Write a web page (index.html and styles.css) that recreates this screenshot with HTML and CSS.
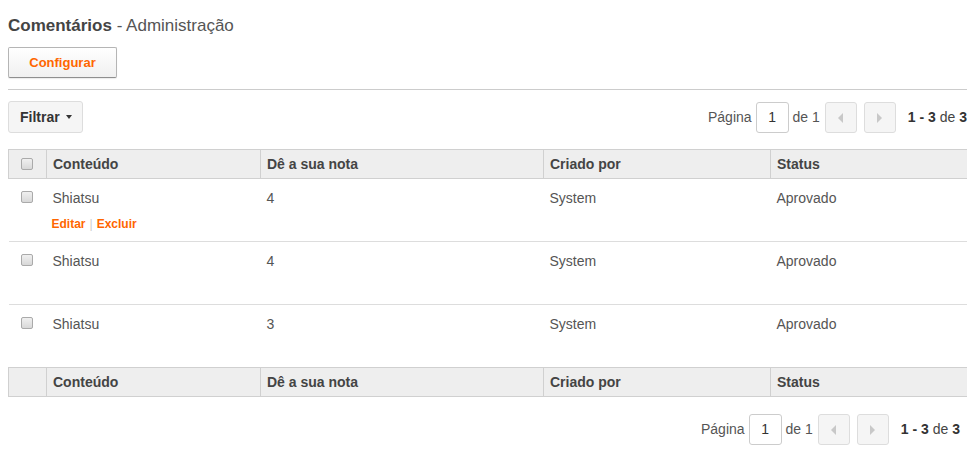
FILE: index.html
```html
<!DOCTYPE html>
<html lang="pt">
<head>
<meta charset="utf-8">
<title>Comentários - Administração</title>
<link rel="stylesheet" href="styles.css">
</head>
<body>
<h1 class="title"><strong>Comentários</strong> - Administração</h1>
<button class="btn-config">Configurar</button>
<hr class="sep">
<div class="toolbar">
  <button class="btn-filter">Filtrar <span class="caret"></span></button>
  <div class="pager">
    <span class="lbl">Página</span>
    <span class="page-input">1</span>
    <span class="lbl">de 1</span>
    <span class="pbtn prev"><span class="tri-left"></span></span>
    <span class="pbtn next"><span class="tri-right"></span></span>
    <span class="count"><b>1 - 3</b> de <b>3</b></span>
  </div>
</div>
<table class="grid">
  <colgroup>
    <col class="c-check"><col class="c-content"><col class="c-nota"><col class="c-criado"><col class="c-status">
  </colgroup>
  <thead>
    <tr><th class="check"><span class="cb"></span></th><th>Conteúdo</th><th>Dê a sua nota</th><th>Criado por</th><th>Status</th></tr>
  </thead>
  <tbody>
    <tr>
      <td class="check"><span class="cb"></span></td>
      <td>Shiatsu<div class="actions"><a>Editar</a><span class="bar">|</span><a>Excluir</a></div></td>
      <td>4</td><td>System</td><td>Aprovado</td>
    </tr>
    <tr>
      <td class="check"><span class="cb"></span></td>
      <td>Shiatsu<div class="actions hidden"><a>Editar</a><span class="bar">|</span><a>Excluir</a></div></td>
      <td>4</td><td>System</td><td>Aprovado</td>
    </tr>
    <tr>
      <td class="check"><span class="cb"></span></td>
      <td>Shiatsu<div class="actions hidden"><a>Editar</a><span class="bar">|</span><a>Excluir</a></div></td>
      <td>3</td><td>System</td><td>Aprovado</td>
    </tr>
  </tbody>
  <tfoot>
    <tr><th class="check"></th><th>Conteúdo</th><th>Dê a sua nota</th><th>Criado por</th><th>Status</th></tr>
  </tfoot>
</table>
<div class="bottom">
  <div class="pager pager-bottom">
    <span class="lbl">Página</span>
    <span class="page-input">1</span>
    <span class="lbl">de 1</span>
    <span class="pbtn prev"><span class="tri-left"></span></span>
    <span class="pbtn next"><span class="tri-right"></span></span>
    <span class="count"><b>1 - 3</b> de <b>3</b></span>
  </div>
</div>
</body>
</html>
```
FILE: styles.css
```css
body {
  margin: 8px;
  font-family: "Liberation Sans", Arial, sans-serif;
  color: #444;
  background: #fff;
}
.title {
  margin: 7px 0 0;
  font-size: 17px;
  line-height: 22px;
  font-weight: normal;
  color: #555;
}
.title strong {
  color: #444;
  font-weight: bold;
}
.btn-config {
  display: block;
  margin-top: 10px;
  width: 109px;
  height: 31px;
  padding: 0;
  font-family: inherit;
  font-size: 13px;
  font-weight: bold;
  color: #f60;
  background: linear-gradient(#ffffff, #f0f0f0);
  border: 1px solid #b5b5b5;
  border-bottom-color: #8f8f8f;
  border-radius: 2px;
  box-shadow: 0 1px 1px rgba(0,0,0,0.08);
}
.sep {
  margin: 11px 0 0;
  border: 0;
  border-top: 1px solid #ccc;
  height: 0;
}
.toolbar {
  margin-top: 11px;
  display: flex;
  justify-content: space-between;
  align-items: flex-start;
}
.btn-filter {
  display: flex;
  align-items: center;
  height: 32px;
  padding: 0 10px 0 11px;
  font-family: inherit;
  font-size: 14px;
  font-weight: bold;
  color: #333;
  background: #f5f5f5;
  border: 1px solid #ddd;
  border-radius: 3px;
}
.caret {
  display: inline-block;
  margin-left: 6px;
  width: 0;
  height: 0;
  border-left: 3px solid transparent;
  border-right: 3px solid transparent;
  border-top: 4px solid #333;
}
.pager {
  display: flex;
  align-items: center;
  height: 32px;
  font-size: 14px;
  color: #555;
}
.pager .lbl { color: #555; }
.page-input {
  margin: 0 4px;
  width: 31px;
  height: 29px;
  border: 1px solid #ccc;
  border-radius: 3px;
  display: flex;
  align-items: center;
  justify-content: center;
  color: #333;
  background: #fff;
}
.pbtn {
  width: 30px;
  height: 29px;
  border: 1px solid #ddd;
  border-radius: 3px;
  background: #f5f5f5;
  display: flex;
  align-items: center;
  justify-content: center;
}
.prev { margin-left: 5px; }
.next { margin-left: 7px; }
.tri-left {
  width: 0; height: 0;
  border-top: 5px solid transparent;
  border-bottom: 5px solid transparent;
  border-right: 5px solid #c8c8c8;
  margin-top: 2px;
}
.tri-right {
  width: 0; height: 0;
  border-top: 5px solid transparent;
  border-bottom: 5px solid transparent;
  border-left: 5px solid #c8c8c8;
  margin-top: 2px;
}
.count {
  margin-left: 12px;
  color: #444;
}
.count b { color: #333; }
.grid {
  margin-top: 16px;
  width: 959px;
  border-collapse: collapse;
  table-layout: fixed;
  font-size: 14px;
}
.c-check { width: 38px; }
.c-content { width: 214px; }
.c-nota { width: 283px; }
.c-criado { width: 227px; }
.c-status { width: 197px; }
.grid th {
  background: #eee;
  border: 1px solid #d0d0d0;
  padding: 6px 6px;
  line-height: 16px;
  text-align: left;
  font-weight: bold;
  color: #444;
}
.grid th.check, .grid td.check {
  text-align: center;
  padding-left: 0;
  padding-right: 2px;
}
.grid th.check .cb { vertical-align: middle; margin-top: -2px; }
.grid td {
  padding: 9px 6px 8px;
  line-height: 20px;
  vertical-align: top;
  color: #555;
  border-bottom: 1px solid #ddd;
}
.grid tbody tr:last-child td { border-bottom: 0; }
.grid td.check { padding-top: 12px; }
.cb {
  display: inline-block;
  width: 10px;
  height: 10px;
  border: 1px solid #aaa;
  border-radius: 2px;
  background: linear-gradient(#f0f0f0, #d8d8d8);
  vertical-align: top;
}
.actions {
  margin-top: 7px;
  line-height: 18px;
  font-size: 12px;
  font-weight: bold;
  margin-left: -1px;
}
.actions a { color: #f60; }
.actions .bar {
  color: #ccc;
  font-weight: normal;
  margin: 0 4px;
}
.actions.hidden { visibility: hidden; }
.bottom {
  margin-top: 16px;
  display: flex;
  justify-content: flex-end;
  padding-right: 7px;
}
```
